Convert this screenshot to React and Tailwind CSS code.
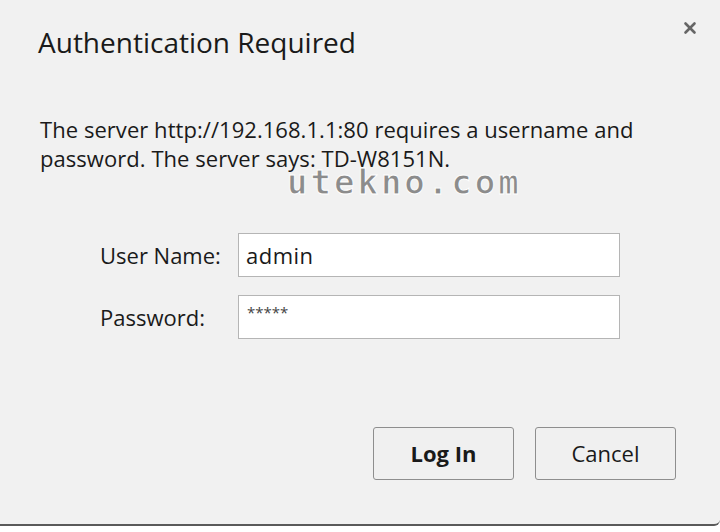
import { X } from "lucide-react";

const font = { fontFamily: '"Open Sans", "Noto Sans", sans-serif' };

const App = () => {
  return (
    <div className="w-[720px] h-[532px] bg-white overflow-hidden" style={font}>
      <div className="relative h-[526px] bg-[#f1f1f1] border-b-2 border-[#5a5a5a] rounded-br-[6px]">
        {/* Title */}
        <div className="h-[60px] flex items-start justify-between pl-[38px] pr-[21px] pt-[24px]">
          <h1 className="text-[28px] leading-[36px] text-[#1a1a1a]">
            Authentication Required
          </h1>
          <X className="w-[18px] h-[18px] mt-[-5px] text-[#666666]" strokeWidth={3.5} />
        </div>

        {/* Message */}
        <p className="mt-[55px] ml-[40px] text-[22px] leading-[29px] text-[#1a1a1a] tracking-[0.05px]">
          The server http://192.168.1.1:80 requires a username and
          <br />
          password. The server says: TD-W8151N.
        </p>

        {/* Watermark */}
        <div
          className="absolute left-[287px] top-[167px] text-[34px] leading-[30px] font-bold text-[#8c8c8c] tracking-[3px]"
          style={{ fontFamily: '"DejaVu Sans Mono", monospace', WebkitTextStroke: "1px #ffffff" }}
        >
          utekno.com
        </div>

        {/* Form */}
        <div className="mt-[60px] ml-[100px] flex flex-col gap-[18px]">
          <div className="flex items-center">
            <label className="w-[138px] text-[22px] text-[#1a1a1a]">User Name:</label>
            <div className="w-[382px] h-[44px] bg-white border border-[#b5b5b5] flex items-center px-[7px] text-[22px] tracking-[0.5px] text-[#1a1a1a]">
              admin
            </div>
          </div>
          <div className="flex items-center">
            <label className="w-[138px] text-[22px] text-[#1a1a1a]">Password:</label>
            <div className="w-[382px] h-[44px] bg-white border border-[#b5b5b5] px-[8px] pt-[8px] text-[15px] leading-[16px] text-[#444]">
              *****
            </div>
          </div>
        </div>

        {/* Buttons */}
        <div className="mt-[88px] ml-[373px] flex gap-[21px]">
          <button className="w-[141px] h-[53px] bg-[#f0f0f0] border border-[#8e8e8e] rounded-[3px] text-[22px] font-bold text-[#1a1a1a]">
            Log In
          </button>
          <button className="w-[141px] h-[53px] bg-[#f0f0f0] border border-[#8e8e8e] rounded-[3px] text-[22px] text-[#1a1a1a]">
            Cancel
          </button>
        </div>
      </div>
    </div>
  );
};

export default App;
